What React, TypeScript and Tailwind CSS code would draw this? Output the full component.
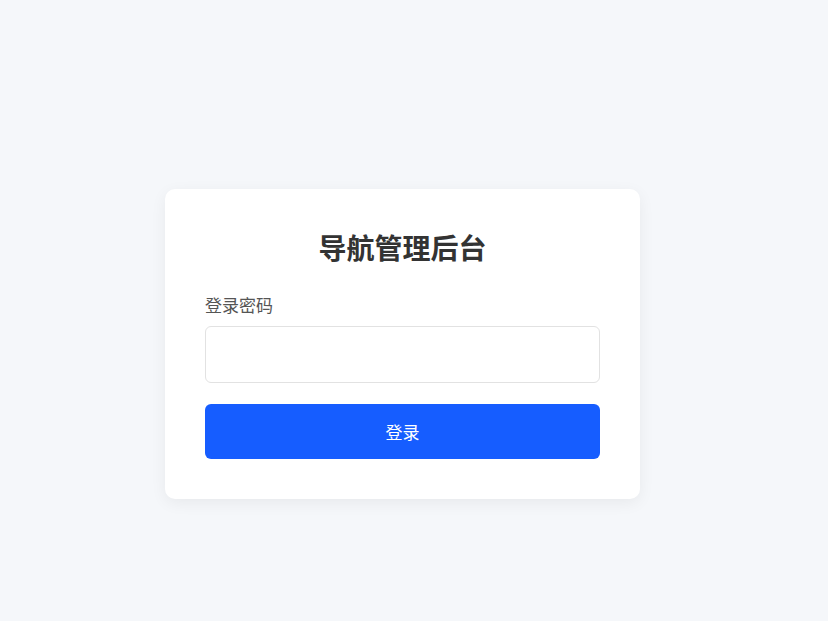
export default function App() {
  return (
    <div
      className="flex min-h-screen items-center justify-center bg-[#f5f7fa] pt-[67px] pr-[23px]"
      style={{ fontFamily: '"Noto Sans CJK SC", "Noto Sans", sans-serif' }}
    >
      <div className="w-[475px] rounded-[10px] bg-white p-10 shadow-[0_4px_16px_rgba(0,0,0,0.06)]">
        <h1 className="text-center text-[28px] leading-[37px] font-bold text-[#333333]">导航管理后台</h1>

        <form className="mt-[26px]" onSubmit={(e) => e.preventDefault()}>
          <label className="block text-[17px] leading-[26px] text-[#555555]">登录密码</label>
          <input
            type="password"
            className="mt-2 block h-[57px] w-full rounded-md border border-[#e2e2e2] bg-white px-3 text-base outline-none"
          />
          <button
            type="submit"
            className="mt-[21px] flex h-[55px] w-full items-center justify-center rounded-md bg-[#165dff] text-[17px] text-white"
          >
            登录
          </button>
        </form>
      </div>
    </div>
  )
}
